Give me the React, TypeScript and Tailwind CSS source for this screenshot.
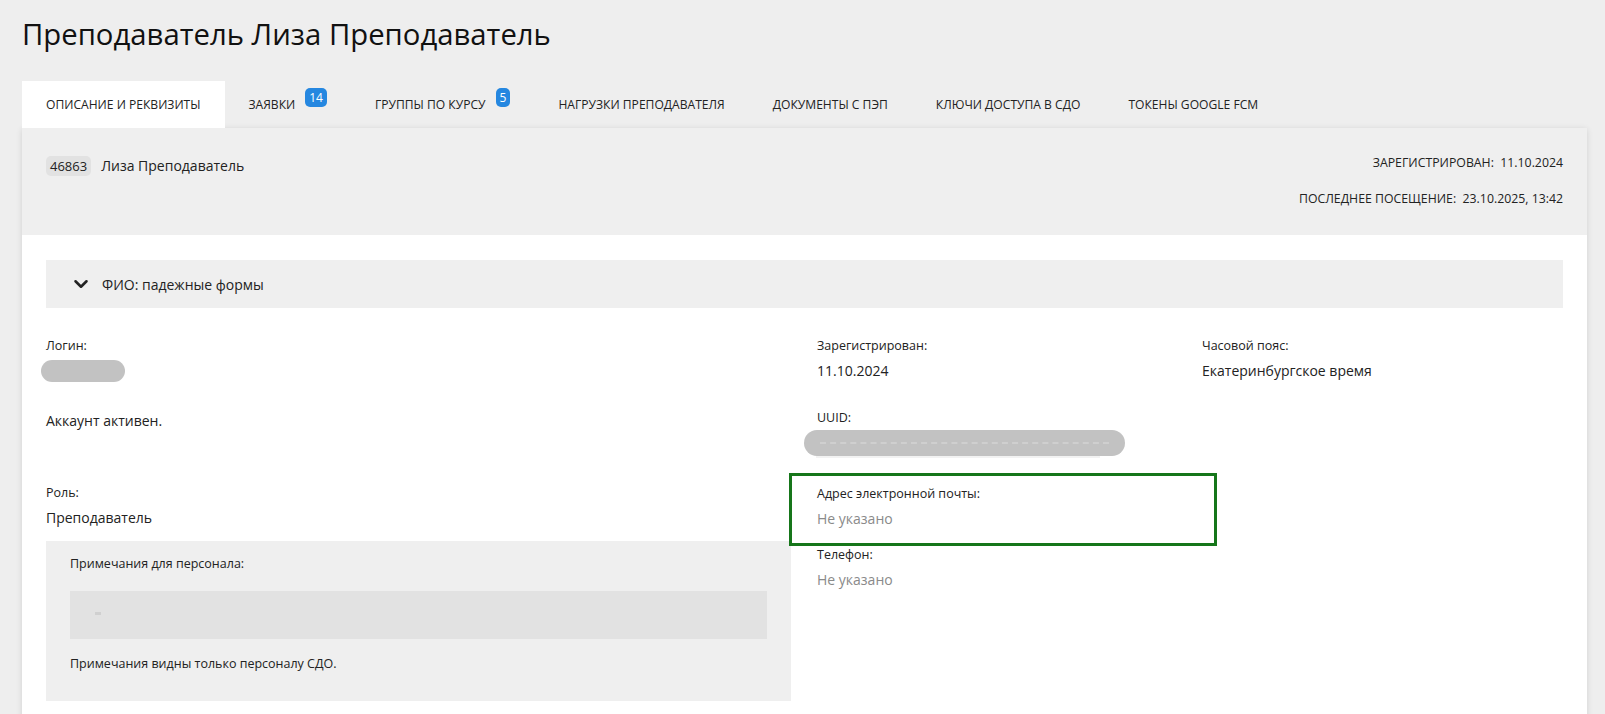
import { ChevronDown } from 'lucide-react';

const tabs = [
    { label: 'Описание и реквизиты', active: true },
    { label: 'Заявки', badge: '14' },
    { label: 'Группы по курсу', badge: '5' },
    { label: 'Нагрузки преподавателя' },
    { label: 'Документы с ПЭП' },
    { label: 'Ключи доступа в СДО' },
    { label: 'Токены Google FCM' },
];

const Field = ({ label, children }: { label: string; children: React.ReactNode }) => (
    <div>
        <div className="text-[12.5px] leading-[18px] text-[#222]">{label}</div>
        <div className="mt-[6px] text-[14px] leading-[20px] text-[#222]">{children}</div>
    </div>
);

const App = () => {
    return (
        <div className="min-h-screen bg-[#eeeeee] font-['Open_Sans','Noto_Sans',sans-serif] text-[#222] overflow-hidden">
            <div className="pl-[22px] pr-[18px] pt-[14px]">
                <h1 className="text-[29.3px] leading-[40px] text-[#111]">Преподаватель Лиза Преподаватель</h1>

                {/* tabs */}
                <div className="mt-[27px] flex">
                    {tabs.map((t) => (
                        <div
                            key={t.label}
                            className={`h-[47px] px-6 flex items-center text-[12.1px] uppercase text-[#222] ${t.active ? 'bg-white' : ''}`}
                        >
                            <span className="mt-[1px]">{t.label}</span>
                            {t.badge && (
                                <span className="ml-[10px] -mt-[15px] min-w-[14px] h-[19px] px-[4px] rounded-[5px] bg-[#2587e0] text-white text-[12px] leading-[19px] text-center">
                                    {t.badge}
                                </span>
                            )}
                        </div>
                    ))}
                </div>

                {/* card */}
                <div className="bg-white shadow-[0_1px_6px_rgba(0,0,0,0.12)] min-h-[600px]">
                    <div className="bg-[#efefef] px-6 pt-[25px] pb-[26px] flex justify-between items-start">
                        <div className="flex items-center mt-[2px]">
                            <span className="h-[20px] px-[4px] rounded-[5px] bg-[#e2e2e2] text-[13px] leading-[20px]">46863</span>
                            <span className="ml-[10px] text-[14px]">Лиза Преподаватель</span>
                        </div>
                        <div className="flex flex-col items-end gap-[16px] text-[12.3px] leading-[20px] uppercase">
                            <div>Зарегистрирован:&nbsp; 11.10.2024</div>
                            <div>Последнее посещение:&nbsp; 23.10.2025, 13:42</div>
                        </div>
                    </div>

                    <div className="px-6 pt-[25px]">
                        <div className="h-[48px] bg-[#efefef] flex items-center pl-[24px]">
                            <ChevronDown className="w-[22px] h-[22px] text-[#222]" strokeWidth={2.8} />
                            <span className="ml-[10px] text-[14px]">ФИО: падежные формы</span>
                        </div>

                        <div className="mt-[29px] flex">
                            {/* left column */}
                            <div className="w-[745px] shrink-0">
                                <div>
                                    <div className="text-[12.5px] leading-[18px]">Логин:</div>
                                    <div className="mt-[4px] h-[24px] flex items-center">
                                        <div className="-ml-[5px] w-[84px] h-[22px] rounded-full bg-[#c2c2c2]" />
                                    </div>
                                </div>
                                <div className="mt-[28px] text-[14px] leading-[20px]">Аккаунт активен.</div>
                                <div className="mt-[53px]">
                                    <Field label="Роль:">Преподаватель</Field>
                                </div>
                                <div className="mt-[13px] h-[160px] bg-[#efefef] px-6 pt-[14px]">
                                    <div className="text-[12.5px] leading-[18px]">Примечания для персонала:</div>
                                    <div className="mt-[18px] h-[48px] bg-[#e2e2e2] pl-[25px] pt-[21px]">
                                        <div className="w-[6px] h-[3px] bg-[#d0d0d0]" />
                                    </div>
                                    <div className="mt-[16px] text-[12.5px] leading-[18px]">Примечания видны только персоналу СДО.</div>
                                </div>
                            </div>

                            {/* right part */}
                            <div className="flex-1 flex">
                                <div className="w-[386px] shrink-0 pl-[26px]">
                                    <Field label="Зарегистрирован:">11.10.2024</Field>
                                    <div className="mt-[28px]">
                                        <div className="text-[12.5px] leading-[18px]">UUID:</div>
                                        <div className="mt-[3px] -ml-[13px] w-[321px] h-[26px] rounded-full bg-[#c2c2c2] flex items-center px-[16px]">
                                            <div className="w-full border-t-2 border-dashed border-[#cfcfcf]" />
                                        </div>
                                        <div className="ml-[-1px] w-[284px] h-[2px] bg-[#f2f2f2]" />
                                    </div>
                                    <div className="mt-[15px] -ml-[28px] w-[428px] h-[73px] border-[3px] border-[#16761a] pl-[25px] pt-[9px]">
                                        <div className="text-[12.5px] leading-[18px]">Адрес электронной почты:</div>
                                        <div className="mt-[6px] text-[14px] leading-[20px] text-[#8a8a8a]">Не указано</div>
                                    </div>
                                    <div className="mt-[0px]">
                                        <Field label="Телефон:">
                                            <span className="text-[#8a8a8a]">Не указано</span>
                                        </Field>
                                    </div>
                                </div>
                                <div className="flex-1 pl-[25px]">
                                    <Field label="Часовой пояс:">Екатеринбургское время</Field>
                                </div>
                            </div>
                        </div>
                        <div className="h-[20px]" />
                    </div>
                </div>
            </div>
        </div>
    );
};

export default App;
